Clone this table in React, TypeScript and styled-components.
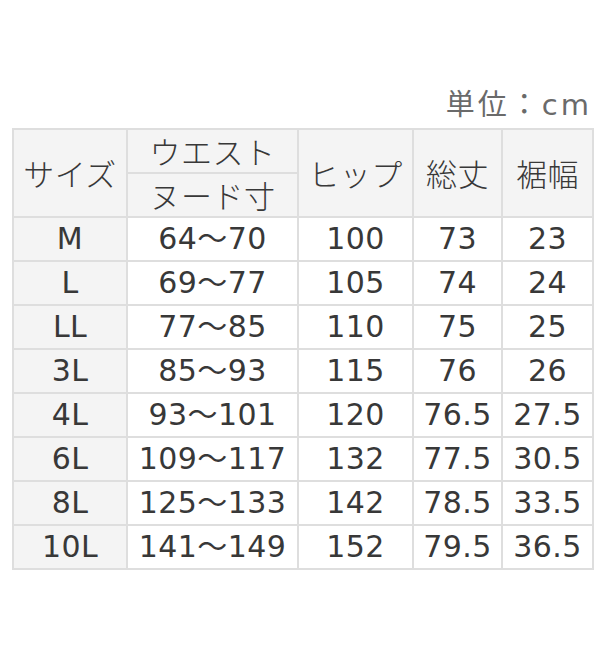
import React from "react";
import styled, { createGlobalStyle } from "styled-components";

const GlobalStyle = createGlobalStyle`
  html, body {
    margin: 0;
    padding: 0;
    background: #ffffff;
  }
`;

const Page = styled.div`
  width: 600px;
  height: 660px;
  box-sizing: border-box;
  padding: 86px 8px 0 12px;
  font-family: "DejaVu Sans", "Noto Sans CJK JP", sans-serif;
  color: #383838;
`;

const Unit = styled.div`
  text-align: right;
  font-family: "DejaVu Sans", "Noto Sans CJK JP", sans-serif;
  font-size: 29px;
  line-height: 38px;
  letter-spacing: 3px;
  color: #6a6a6a;
  height: 42px;
`;

const Table = styled.table`
  border-collapse: collapse;
  width: 580px;
  table-layout: fixed;
`;

const Cell = styled.td<{ $head?: boolean; $tint?: boolean }>`
  border: 2px solid #dedede;
  height: 42px;
  padding: 0;
  text-align: center;
  vertical-align: middle;
  font-weight: ${(p) => (p.$head ? 300 : 400)};
  font-size: ${(p) => (p.$head ? "31px" : "30px")};
  letter-spacing: ${(p) => (p.$head ? "0.5px" : "0.4px")};
  font-family: ${(p) =>
    p.$head ? '"Noto Sans CJK JP", sans-serif' : '"DejaVu Sans", "Noto Sans CJK JP", sans-serif'};
  line-height: 42px;
  white-space: nowrap;
  background: ${(p) => (p.$tint ? "#f4f4f4" : "#ffffff")};
`;

const rows = [
  ["M", "64～70", "100", "73", "23"],
  ["L", "69～77", "105", "74", "24"],
  ["LL", "77～85", "110", "75", "25"],
  ["3L", "85～93", "115", "76", "26"],
  ["4L", "93～101", "120", "76.5", "27.5"],
  ["6L", "109～117", "132", "77.5", "30.5"],
  ["8L", "125～133", "142", "78.5", "33.5"],
  ["10L", "141～149", "152", "79.5", "36.5"],
];

export default function App() {
  return (
    <Page>
      <GlobalStyle />
      <Unit>単位：cm</Unit>
      <Table>
        <colgroup>
          <col style={{ width: 114 }} />
          <col style={{ width: 171 }} />
          <col style={{ width: 115 }} />
          <col style={{ width: 89 }} />
          <col style={{ width: 91 }} />
        </colgroup>
        <thead>
          <tr>
            <Cell as="th" rowSpan={2} $head $tint>
              サイズ
            </Cell>
            <Cell as="th" $head $tint>
              ウエスト
            </Cell>
            <Cell as="th" rowSpan={2} $head $tint>
              ヒップ
            </Cell>
            <Cell as="th" rowSpan={2} $head $tint>
              総丈
            </Cell>
            <Cell as="th" rowSpan={2} $head $tint>
              裾幅
            </Cell>
          </tr>
          <tr>
            <Cell as="th" $head $tint>
              ヌード寸
            </Cell>
          </tr>
        </thead>
        <tbody>
          {rows.map((r) => (
            <tr key={r[0]}>
              {r.map((v, i) => (
                <Cell key={i} $tint={i === 0}>
                  {v}
                </Cell>
              ))}
            </tr>
          ))}
        </tbody>
      </Table>
    </Page>
  );
}
